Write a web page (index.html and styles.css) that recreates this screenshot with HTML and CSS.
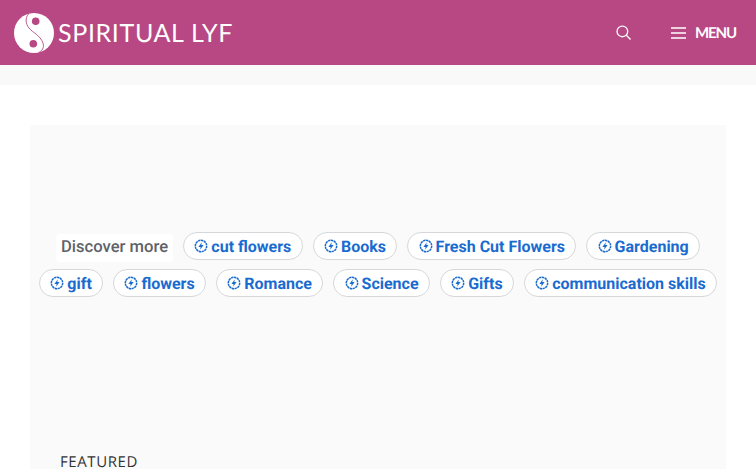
FILE: index.html
```html
<!DOCTYPE html>
<html lang="en">
<head>
<meta charset="utf-8">
<title>Spiritual Lyf</title>
<link rel="stylesheet" href="styles.css">
</head>
<body>
<header class="site-header">
  <a class="brand" href="#">
    <svg class="brand-mark" viewBox="0 0 40 40" width="40" height="40" aria-hidden="true">
      <circle cx="20" cy="20" r="20" fill="#fff"/>
      <path d="M14.500 1C11 5 11.500 11 15 15C19 20 26 22 29 30C30.500 35 28 38 24.500 39.500" fill="none" stroke="#b84883" stroke-width=".9"/>
      <circle cx="21.700" cy="8.200" r="3.800" fill="#b84883"/>
      <circle cx="19.300" cy="30.800" r="3.800" fill="#b84883"/>
    </svg>
    <span class="brand-name">SPIRITUAL LYF</span>
  </a>
  <nav class="header-actions">
    <svg class="search-icon" viewBox="0 0 16 16" width="15" height="15" aria-hidden="true">
      <circle cx="6.800" cy="6.800" r="5.700" fill="none" stroke="#fff" stroke-width="1.400"/>
      <path d="M11 11l4.500 4.500" fill="none" stroke="#fff" stroke-width="1.400"/>
    </svg>
    <button class="menu-toggle" type="button">
      <svg viewBox="0 0 15 12" width="15" height="12" aria-hidden="true">
        <path d="M0 1h15M0 6h15M0 11h15" stroke="#fff" stroke-width="1.300"/>
      </svg>
      <span>MENU</span>
    </button>
  </nav>
</header>
<div class="strip"></div>
<main class="content">
  <section class="ad-box">
    <div class="chips">
      <span class="discover">Discover more</span>
      <a class="chip" href="#"><svg class="bolt" viewBox="0 0 14 14" aria-hidden="true"><use href="#bolt-icon"/></svg>cut flowers</a>
      <a class="chip" href="#"><svg class="bolt" viewBox="0 0 14 14" aria-hidden="true"><use href="#bolt-icon"/></svg>Books</a>
      <a class="chip" href="#"><svg class="bolt" viewBox="0 0 14 14" aria-hidden="true"><use href="#bolt-icon"/></svg>Fresh Cut Flowers</a>
      <a class="chip" href="#"><svg class="bolt" viewBox="0 0 14 14" aria-hidden="true"><use href="#bolt-icon"/></svg>Gardening</a>
      <a class="chip" href="#"><svg class="bolt" viewBox="0 0 14 14" aria-hidden="true"><use href="#bolt-icon"/></svg>gift</a>
      <a class="chip" href="#"><svg class="bolt" viewBox="0 0 14 14" aria-hidden="true"><use href="#bolt-icon"/></svg>flowers</a>
      <a class="chip" href="#"><svg class="bolt" viewBox="0 0 14 14" aria-hidden="true"><use href="#bolt-icon"/></svg>Romance</a>
      <a class="chip" href="#"><svg class="bolt" viewBox="0 0 14 14" aria-hidden="true"><use href="#bolt-icon"/></svg>Science</a>
      <a class="chip" href="#"><svg class="bolt" viewBox="0 0 14 14" aria-hidden="true"><use href="#bolt-icon"/></svg>Gifts</a>
      <a class="chip" href="#"><svg class="bolt" viewBox="0 0 14 14" aria-hidden="true"><use href="#bolt-icon"/></svg>communication skills</a>
    </div>
    <h2 class="featured">FEATURED</h2>
  </section>
</main>
<svg class="defs" width="0" height="0" aria-hidden="true">
  <symbol id="bolt-icon" viewBox="0 0 14 14">
    <circle cx="7" cy="7" r="5.700" fill="none" stroke="#1a6bd0" stroke-width="1.500" stroke-dasharray="2.400 .5"/>
    <path d="M7.800 3.200L4.400 7.900h2.200L6.100 10.800 9.600 6.100H7.300z" fill="#1a6bd0"/>
  </symbol>
</svg>
</body>
</html>
```
FILE: styles.css
```css
* { box-sizing: border-box; }
html, body { margin: 0; padding: 0; height: 469px; overflow: hidden; background: #fff; }
.site-header {
  height: 65px;
  background: #b84883;
  display: flex;
  align-items: center;
  justify-content: space-between;
  padding: 0 20px 0 14px;
}
.brand { display: flex; align-items: center; gap: 4px; color: #fff; text-decoration: none; }
.brand-mark { display: block; }
.brand-name {
  font-family: "Lato", sans-serif;
  font-weight: 400;
  font-size: 25px;
  line-height: 30px;
  letter-spacing: 0.65px;
  white-space: nowrap;
  text-rendering: geometricPrecision;
}
.header-actions { display: flex; align-items: center; gap: 40px; }
.search-icon { display: block; }
.menu-toggle {
  display: flex;
  align-items: center;
  gap: 9px;
  padding: 0;
  border: 0;
  background: none;
  color: #fff;
  font-family: "Lato", sans-serif;
  font-weight: 700;
  font-size: 15px;
  letter-spacing: -1.1px;
  text-rendering: geometricPrecision;
}
.menu-toggle svg { display: block; }
.strip { height: 20px; background: #f9f9f9; }
.content { padding: 40px 30px 0; }
.ad-box { width: 696px; height: 344px; background: #fafafa; padding-top: 107px; }
.chips {
  display: flex;
  flex-wrap: wrap;
  justify-content: center;
  align-items: flex-start;
  gap: 9px 10px;
  width: 696px;
  margin: 0;
}
.discover {
  margin: 2px 0 -2px;
  background: #fff;
  color: #5f6368;
  font-family: "Roboto", sans-serif;
  font-weight: 500;
  font-size: 16.600px;
  line-height: 28px;
  padding: 0 5px;
  border-radius: 4px;
  text-rendering: geometricPrecision;
}
.chip {
  display: flex;
  align-items: center;
  height: 28px;
  padding: 0 10.300px;
  gap: 3px;
  border: 1px solid #d6d7da;
  border-radius: 14px;
  background: #fff;
  color: #1a6bd0;
  font-family: "Roboto", sans-serif;
  font-weight: 700;
  font-size: 16px;
  text-decoration: none;
  white-space: nowrap;
  text-rendering: geometricPrecision;
}
.bolt { width: 14px; height: 14px; display: block; }
.featured {
  margin: 154px 0 0 30px;
  font-family: "Open Sans", sans-serif;
  font-weight: 400;
  font-size: 15px;
  line-height: 22px;
  letter-spacing: 0.6px;
  color: #333;
  text-rendering: geometricPrecision;
}
.defs { position: absolute; }
```
